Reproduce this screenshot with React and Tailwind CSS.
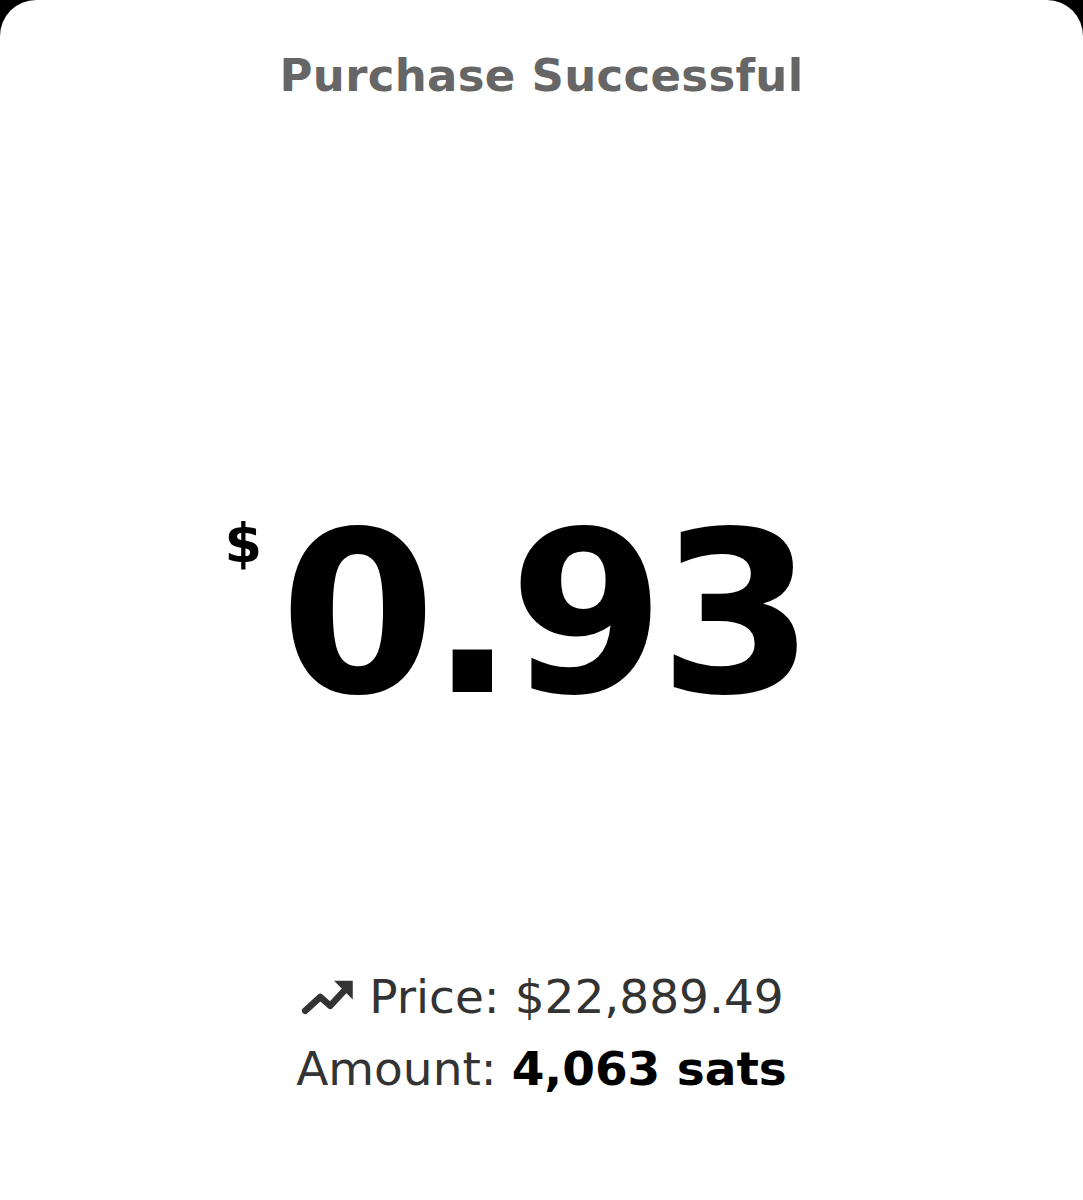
import React from 'react';

const TrendUp = ({ className = "" }) => (
  <svg viewBox="0 0 24 24" className={className} fill="none">
    <path d="M2.5 17.5l6-5.5 4 3.5 6.5-7" stroke="currentColor" strokeWidth="2.6" strokeLinecap="round" strokeLinejoin="round" />
    <path d="M14 5.5h7.5V13z" fill="currentColor" />
  </svg>
);

function App() {
  return (
    <div className="min-h-screen bg-black" style={{ fontFamily: '"DejaVu Sans", "Noto Sans", sans-serif' }}>
      <div className="w-[1083px] h-[1200px] bg-white rounded-t-[36px] flex flex-col items-center">
        {/* Header */}
        <h1 className="mt-[48px] text-[45px] leading-[56px] font-bold text-[#666666] tracking-[0.3px]">
          Purchase Successful
        </h1>

        {/* Amount */}
        <div className="flex-1 flex items-center justify-center pt-[160px] pr-[50px]">
          <div className="flex items-start">
            <span className="text-[54px] leading-none font-bold text-black mt-[2px] mr-[18px]">$</span>
            <span className="text-[224px] leading-[200px] font-bold text-black tracking-[-6px]">0.93</span>
          </div>
        </div>

        {/* Details */}
        <div className="mb-[100px] flex flex-col items-center gap-[10px]">
          <div className="flex items-center text-[#333333] text-[47px] leading-[62px]">
            <TrendUp className="w-[60px] h-[60px] mr-[10px] text-[#333333]" />
            <span>Price: $22,889.49</span>
          </div>
          <div className="text-[#333333] text-[47px] leading-[62px]">
            Amount: <span className="font-bold text-black">4,063 sats</span>
          </div>
        </div>
      </div>
    </div>
  );
}

export default App;
